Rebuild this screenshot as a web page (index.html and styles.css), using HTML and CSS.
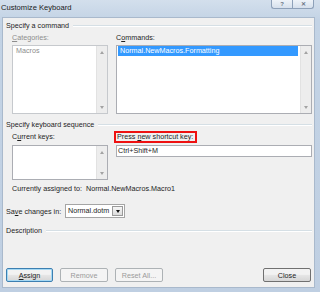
FILE: index.html
```html
<!DOCTYPE html>
<html lang="en">
<head>
    <meta charset="UTF-8">
    <meta name="viewport" content="width=device-width, initial-scale=1.0">
    <title>Customize Keyboard</title>
    <link rel="stylesheet" href="styles.css">
</head>
<body>
    <div class="window">
        <div class="titlebar">
            <span class="title">Customize Keyboard</span>
            <div class="caption-btns">
                <span class="cap-btn help">?</span>
                <span class="cap-btn close">&#10005;</span>
            </div>
        </div>

        <div class="client">
            <!-- Command -->
            <div class="group-head"><span>Specify a command</span></div>
            <div class="pair indent">
                <div class="col-left">
                    <div class="label disabled"><u>C</u>ategories:</div>
                    <div class="listbox disabled cmd-list">
                        <div class="items">
                            <div class="item">Macros</div>
                        </div>
                        <div class="scroll">
                            <span class="arrow up"></span>
                            <span class="arrow down"></span>
                        </div>
                    </div>
                </div>
                <div class="col-right">
                    <div class="label">C<u>o</u>mmands:</div>
                    <div class="listbox cmd-list">
                        <div class="items">
                            <div class="item selected">Normal.NewMacros.Formatting</div>
                        </div>
                        <div class="scroll">
                            <span class="arrow up"></span>
                            <span class="arrow down"></span>
                        </div>
                    </div>
                </div>
            </div>

            <!-- Keyboard sequence -->
            <div class="group-head second"><span>Specify keyboard sequence</span></div>
            <div class="pair indent">
                <div class="col-left">
                    <div class="label">C<u>u</u>rrent keys:</div>
                    <div class="listbox keys-list">
                        <div class="items"></div>
                        <div class="scroll">
                            <span class="arrow up"></span>
                            <span class="arrow down"></span>
                        </div>
                    </div>
                </div>
                <div class="col-right">
                    <div class="label"><span class="hotkey-label">Press <u>n</u>ew shortcut key:</span></div>
                    <div class="textbox">Ctrl+Shift+M</div>
                </div>
            </div>

            <div class="assigned indent">
                <span class="assigned-label">Currently assigned to:</span>
                <span>Normal.NewMacros.Macro1</span>
            </div>

            <div class="save-row">
                <span class="save-label">Sa<u>v</u>e changes in:</span>
                <div class="combo">
                    <span class="combo-text">Normal.dotm</span>
                    <span class="combo-btn"><span class="arrow down dark"></span></span>
                </div>
            </div>

            <div class="group-head desc"><span>Description</span></div>

            <div class="buttons">
                <button class="btn default"><u>A</u>ssign</button>
                <button class="btn" disabled>Remove</button>
                <button class="btn" disabled>Reset All...</button>
                <button class="btn close-btn">Close</button>
            </div>
        </div>
    </div>
</body>
</html>
```

FILE: styles.css
```css
body {
    margin: 0;
    font-family: "Liberation Sans", Arial, sans-serif;
    font-size: 7.2px;
    color: #1e1e1e;
}

.window {
    width: 320px;
    height: 292px;
    background: linear-gradient(#d3dfec, #c3d3e5 20px, #bfcfe2);
    overflow: hidden;
}

/* title bar */
.titlebar {
    height: 18px;
    display: flex;
}

.title {
    padding-left: 1px;
    line-height: 16px;
    font-size: 7.6px;
    color: #1a1a1a;
}

.caption-btns {
    display: flex;
    margin-left: auto;
    margin-right: 6px;
    align-self: flex-start;
}

.cap-btn {
    width: 20px;
    height: 8px;
    border: 1px solid #8ea1b9;
    border-top: none;
    background: linear-gradient(#eef3f8, #d6e0ec);
    color: #6b7584;
    font-size: 6px;
    line-height: 8px;
    text-align: center;
    font-weight: bold;
}

.cap-btn.help {
    border-radius: 0 0 0 3px;
    border-right: none;
}

.cap-btn.close {
    border-radius: 0 0 3px 0;
}

/* client area */
.client {
    margin-left: 3px;
    width: 311px;
    height: 269px;
    box-sizing: border-box;
    padding: 1px 2px 5px 3px;
    background-color: #f0f0f0;
    box-shadow: 0 0 0 1px #a9b9cc;
    display: flex;
    flex-direction: column;
}

.group-head {
    display: flex;
    align-items: center;
    height: 12px;
    flex-shrink: 0;
}

.group-head::after {
    content: "";
    flex: 1;
    height: 1px;
    margin-left: 4px;
    background-color: #d5dfe5;
    box-shadow: 0 1px 0 #fff;
}

.group-head.second {
    margin-top: 4px;
}

.group-head.desc {
    margin-top: 6px;
}

.indent {
    padding-left: 6px;
}

.pair {
    display: flex;
    gap: 8px;
}

.col-left {
    width: 96px;
}

.col-right {
    flex: 1;
}

.label {
    height: 12px;
    line-height: 12px;
    margin-top: 1px;
    margin-bottom: 1px;
}

.pair + .group-head + .pair .label {
    margin-bottom: 2px;
}

.label.disabled,
.listbox.disabled .item {
    color: #8d8d8d;
}

.hotkey-label {
    display: inline-block;
    height: 12px;
    box-sizing: border-box;
    line-height: 8px;
    border: 2px solid #ee1111;
    margin-left: -2px;
    padding: 0 2px 0 1px;
}

/* lists */
.listbox {
    display: flex;
    background-color: #fff;
    border: 1px solid #abadb3;
    box-sizing: border-box;
}

.listbox.disabled {
    border-color: #c6c9cd;
}

.cmd-list {
    height: 69px;
}

.keys-list {
    height: 35px;
}

.items {
    flex: 1;
    padding: 0 2px 0 1px;
}

.item {
    height: 10px;
    line-height: 10px;
    padding-left: 2px;
}

.item.selected {
    background-color: #3399ff;
    color: #fff;
}

.scroll {
    width: 10px;
    background-color: #ededed;
    border-left: 1px solid #e2e2e2;
    display: flex;
    flex-direction: column;
    justify-content: space-between;
    align-items: center;
    padding: 5px 0 4px;
}

.arrow {
    width: 0;
    height: 0;
    border-left: 2.5px solid transparent;
    border-right: 2.5px solid transparent;
}

.arrow.up {
    border-bottom: 3px solid #a3a3a3;
}

.arrow.down {
    border-top: 3px solid #a3a3a3;
}

.arrow.down.dark {
    border-top-color: #111;
}

.textbox {
    height: 12px;
    box-sizing: border-box;
    border: 1px solid #abadb3;
    background-color: #fff;
    line-height: 10px;
    padding-left: 1px;
}

.assigned {
    display: flex;
    height: 12px;
    line-height: 12px;
    margin-top: 3px;
}

.assigned-label {
    width: 74px;
}

.save-row {
    display: flex;
    align-items: center;
    height: 14px;
    margin-top: 9px;
}

.save-label {
    width: 59px;
}

.combo {
    display: flex;
    width: 60px;
    height: 14px;
    box-sizing: border-box;
    border: 1px solid #a5a5a5;
    background-color: #fff;
}

.combo-text {
    flex: 1;
    line-height: 12px;
    padding-left: 2px;
}

.combo-btn {
    width: 11px;
    margin: 1px;
    box-sizing: border-box;
    border: 1px solid #9a9a9a;
    background: linear-gradient(#f6f6f6, #dcdcdc);
    display: flex;
    align-items: center;
    justify-content: center;
}

/* bottom buttons */
.buttons {
    display: flex;
    gap: 7px;
    margin-top: auto;
    padding-right: 1px;
}

.btn {
    width: 48px;
    height: 14px;
    padding: 0;
    font-family: inherit;
    font-size: 7.2px;
    color: #1e1e1e;
    border: 1px solid #707070;
    border-radius: 2px;
    background: linear-gradient(#f2f2f2 45%, #e6e6e6 50%, #d6d6d6);
}

.btn.default {
    width: 47px;
    border-color: #3c7fb1;
    box-shadow: inset 0 0 0 1px #a6d9f4;
}

.btn:disabled {
    border-color: #adb2b5;
    background: #f4f4f4;
    color: #9a9a9a;
}

.close-btn {
    margin-left: auto;
}
```
